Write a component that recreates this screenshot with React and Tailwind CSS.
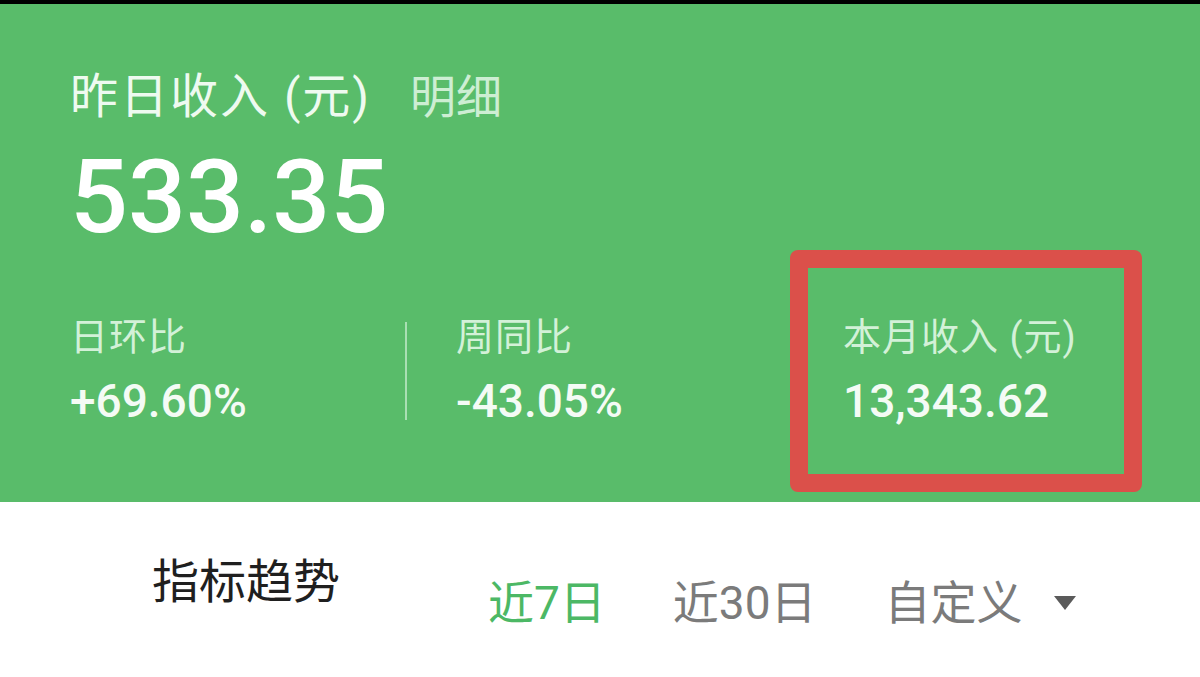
const FONT = { fontFamily: 'Roboto, "Noto Sans CJK SC", sans-serif' }

function Stat({ label, value }) {
  return (
    <div className="flex flex-col">
      <span className="text-[38px] leading-[40px] tracking-[1px] text-[#d3f1d8]">{label}</span>
      <span className="mt-[20px] text-[46px] leading-[48px] font-medium text-[#f4fbf5]">{value}</span>
    </div>
  )
}

export default function App() {
  return (
    <div className="w-[1200px] h-[677px] overflow-hidden bg-white" style={FONT}>
      <div className="h-[4px] bg-black" />

      {/* Income summary */}
      <div className="bg-[#59bc6a] pl-[70px] pt-[67px] pb-[10px]">
        <div className="flex items-center h-[52px]">
          <span className="text-[48px] leading-[52px] tracking-[2px] text-[#eefaf0]">昨日收入 (元)</span>
          <span className="ml-[39px] text-[46px] leading-[52px] text-[#cdeed3]">明细</span>
        </div>
        <div className="mt-[22px] text-[102px] leading-[104px] font-medium text-white">533.35</div>

        <div className="mt-[1px] flex items-center">
          <div className="w-[335px]">
            <Stat label="日环比" value="+69.60%" />
          </div>
          <div className="w-[2px] h-[98px] bg-[#a9dfb3]" />
          <div className="ml-[49px] w-[334px]">
            <Stat label="周同比" value="-43.05%" />
          </div>
          <div className="w-[352px] h-[242px] rounded-[8px] border-[18px] border-[#db504a] flex items-center pl-[35px]">
            <Stat label="本月收入 (元)" value="13,343.62" />
          </div>
        </div>
      </div>

      {/* Trend header */}
      <div className="flex items-start pl-[152px] pt-[56px]">
        <span className="text-[47px] leading-[48px] text-[#1f1f1f]">指标趋势</span>
        <div className="ml-[148px] mt-[21px] flex items-center text-[46px] leading-[48px]">
          <span className="text-[#4cb865]">近7日</span>
          <span className="ml-[67px] text-[#7b7b7b]">近30日</span>
          <span className="ml-[68px] text-[#7b7b7b]">自定义</span>
          <svg className="ml-[31px]" width="22" height="14" viewBox="0 0 22 14">
            <path d="M0 0h22L11 14z" fill="#5a5a5a" />
          </svg>
        </div>
      </div>
    </div>
  )
}
